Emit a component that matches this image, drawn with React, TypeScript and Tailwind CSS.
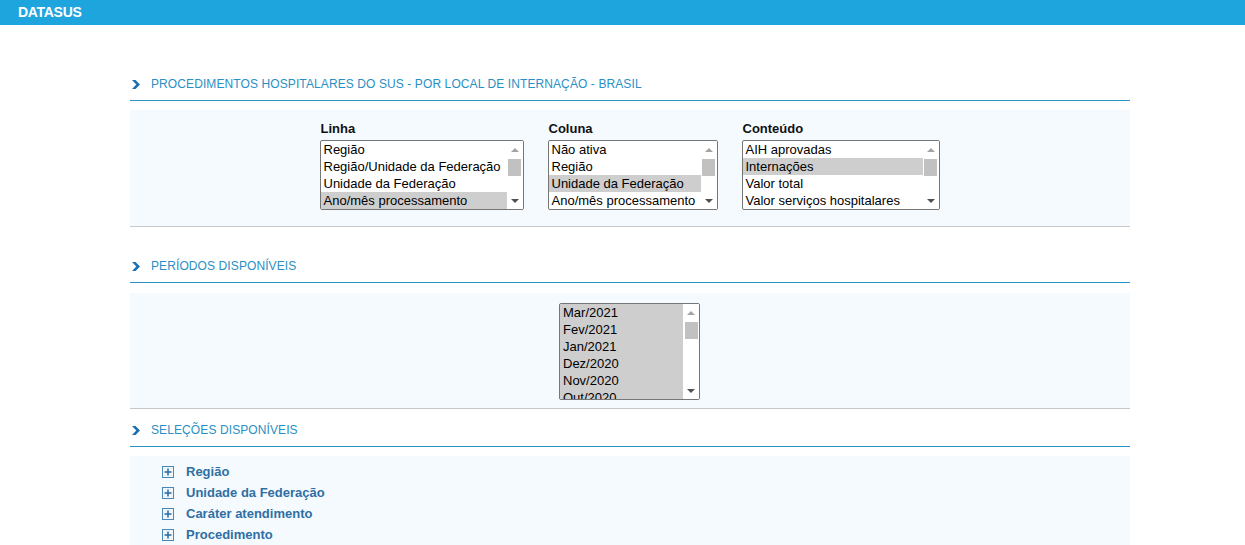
import React from "react";

const FONT = { fontFamily: '"Liberation Sans", Arial, sans-serif' };

type Opt = { label: string; selected?: boolean };

const Chevron: React.FC = () => (
  <svg width="8" height="9" viewBox="0 0 8 9" className="shrink-0">
    <polygon points="0,0 3.5,0 8,4.5 3.5,9 0,9 4.3,4.5" fill="#1b6fb3" />
  </svg>
);

const SectionTitle: React.FC<{ title: string; className?: string }> = ({ title, className }) => (
  <div className={`flex items-center gap-[11px] border-b border-[#2a95c5] pb-[7px] pl-[2px] ${className ?? ""}`}>
    <Chevron />
    <span className="text-[12px] leading-[18px] tracking-[0.1px] text-[#2a8fc4]">{title}</span>
  </div>
);

const ScrollBar: React.FC = () => (
  <div className="flex w-[16px] shrink-0 flex-col bg-white">
    <div className="flex h-[17px] items-center justify-center">
      <div className="h-0 w-0 border-x-[4px] border-b-[4px] border-x-transparent border-b-[#a3a3a3]" />
    </div>
    <div className="flex-1">
      <div className="mx-auto mt-[1px] h-[17px] w-[13px] bg-[#c1c1c1]" />
    </div>
    <div className="flex h-[17px] items-center justify-center">
      <div className="h-0 w-0 border-x-[4px] border-t-[4px] border-x-transparent border-t-[#505050]" />
    </div>
  </div>
);

const ListBox: React.FC<{ options: Opt[]; width: string; height: string; allSelected?: boolean }> = ({
  options, width, height, allSelected,
}) => (
  <div className={`flex overflow-hidden rounded-[2px] border border-[#767676] bg-white ${width} ${height}`}>
    <div className={`flex-1 overflow-hidden ${allSelected ? "bg-[#cecece]" : ""}`}>
      {options.map((o) => (
        <div
          key={o.label}
          className={`h-[17px] whitespace-nowrap pl-[3px] text-[13px] leading-[17px] text-black ${o.selected ? "bg-[#cecece]" : ""}`}
        >
          {o.label}
        </div>
      ))}
    </div>
    <ScrollBar />
  </div>
);

const Field: React.FC<{ label: string; children: React.ReactNode }> = ({ label, children }) => (
  <div className="flex flex-col">
    <div className="mb-[3px] h-[16px] pl-[1px] text-[13px] font-bold leading-[16px] text-[#111]">{label}</div>
    {children}
  </div>
);

const SELECOES = ["Região", "Unidade da Federação", "Caráter atendimento", "Procedimento"];

const PlusBox: React.FC = () => (
  <div className="flex h-[12px] w-[12px] shrink-0 items-center justify-center border border-[#4a88b8] bg-[#eef5fb]">
    <svg width="8" height="8" viewBox="0 0 8 8">
      <rect x="3.25" y="0.5" width="1.5" height="7" fill="#2b6aa0" />
      <rect x="0.5" y="3.25" width="7" height="1.5" fill="#2b6aa0" />
    </svg>
  </div>
);

export default function App() {
  return (
    <div className="min-h-[545px] bg-white" style={FONT}>
      <div className="flex h-[25px] items-center bg-[#1fa5de] pl-[18px]">
        <span className="text-[14px] font-bold tracking-[-0.3px] text-white">DATASUS</span>
      </div>

      <div className="ml-[130px] w-[1000px]">
        {/* Conteúdo da tabela */}
        <SectionTitle className="mt-[50px]" title="PROCEDIMENTOS HOSPITALARES DO SUS - POR LOCAL DE INTERNAÇÃO - BRASIL" />
        <div className="mt-[9px] flex justify-center gap-[24px] border-b border-[#c8c8c8] bg-[#f5faff] pt-[11px] pb-[16px] pr-[1px]">
          <Field label="Linha">
            <ListBox
              width="w-[204px]"
              height="h-[70px]"
              options={[
                { label: "Região" },
                { label: "Região/Unidade da Federação" },
                { label: "Unidade da Federação" },
                { label: "Ano/mês processamento", selected: true },
              ]}
            />
          </Field>
          <Field label="Coluna">
            <ListBox
              width="w-[170px]"
              height="h-[70px]"
              options={[
                { label: "Não ativa" },
                { label: "Região" },
                { label: "Unidade da Federação", selected: true },
                { label: "Ano/mês processamento" },
              ]}
            />
          </Field>
          <Field label="Conteúdo">
            <ListBox
              width="w-[198px]"
              height="h-[70px]"
              options={[
                { label: "AIH aprovadas" },
                { label: "Internações", selected: true },
                { label: "Valor total" },
                { label: "Valor serviços hospitalares" },
              ]}
            />
          </Field>
        </div>

        {/* Períodos */}
        <SectionTitle className="mt-[30px]" title="PERÍODOS DISPONÍVEIS" />
        <div className="mt-[10px] flex justify-center border-b border-[#c8c8c8] bg-[#f5faff] pt-[10px] pb-[8px] pr-[1px]">
          <ListBox
            width="w-[141px]"
            height="h-[97px]"
            allSelected
            options={[
              { label: "Mar/2021" },
              { label: "Fev/2021" },
              { label: "Jan/2021" },
              { label: "Dez/2020" },
              { label: "Nov/2020" },
              { label: "Out/2020" },
            ]}
          />
        </div>

        {/* Seleções */}
        <SectionTitle className="mt-[12px]" title="SELEÇÕES DISPONÍVEIS" />
        <div className="mt-[9px] flex flex-col bg-[#f5faff] pt-[5px] pl-[32px] pb-[10px]">
          {SELECOES.map((s) => (
            <div key={s} className="flex h-[21px] items-center gap-[12px]">
              <PlusBox />
              <span className="text-[13px] font-bold text-[#2f6fa3]">{s}</span>
            </div>
          ))}
        </div>
      </div>
    </div>
  );
}
